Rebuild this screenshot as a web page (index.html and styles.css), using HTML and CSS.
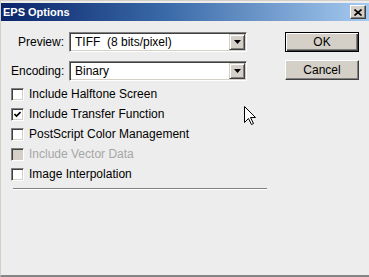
FILE: index.html
```html
<!DOCTYPE html>
<html lang="en">
<head>
    <meta charset="UTF-8">
    <meta name="viewport" content="width=device-width, initial-scale=1.0">
    <title>EPS Options</title>
    <link rel="stylesheet" href="styles.css">
</head>
<body>
    <div class="window">
        <!-- Title bar -->
        <div class="titlebar">
            <span class="title">EPS Options</span>
            <button class="close" aria-label="Close">
                <svg width="8" height="7" viewBox="0 0 8 7">
                    <path d="M0.5 0.5 L7.5 6.5 M7.5 0.5 L0.5 6.5" stroke="#000" stroke-width="1.6" fill="none"/>
                </svg>
            </button>
        </div>

        <div class="content">
            <div class="form">
                <div class="field">
                    <label class="field-label">Preview:</label>
                    <div class="combo">
                        <span class="combo-text">TIFF  (8 bits/pixel)</span>
                        <span class="combo-btn">
                            <svg width="7" height="4" viewBox="0 0 7 4"><polygon points="0,0 7,0 3.5,4" fill="#000"/></svg>
                        </span>
                    </div>
                </div>
                <div class="field">
                    <label class="field-label">Encoding:</label>
                    <div class="combo">
                        <span class="combo-text">Binary</span>
                        <span class="combo-btn">
                            <svg width="7" height="4" viewBox="0 0 7 4"><polygon points="0,0 7,0 3.5,4" fill="#000"/></svg>
                        </span>
                    </div>
                </div>

                <ul class="checks">
                    <li class="check"><span class="box"></span>Include Halftone Screen</li>
                    <li class="check"><span class="box checked">
                        <svg width="7" height="7" viewBox="0 0 7 7"><polyline points="0.5,3 2.5,5 6.5,1" stroke="#000" stroke-width="1.6" fill="none"/></svg>
                    </span>Include Transfer Function</li>
                    <li class="check"><span class="box"></span>PostScript Color Management</li>
                    <li class="check disabled"><span class="box"></span>Include Vector Data</li>
                    <li class="check"><span class="box"></span>Image Interpolation</li>
                </ul>

                <div class="separator"></div>
            </div>

            <div class="buttons">
                <button class="btn default">OK</button>
                <button class="btn">Cancel</button>
            </div>
        </div>

        <!-- mouse pointer -->
        <svg class="cursor" width="12" height="19" viewBox="0 0 12 19">
            <path d="M0.5 0.5 L0.5 16.5 L4.5 12.5 L7.5 18.5 L9.5 17.5 L6.5 11.5 L11.5 11.5 Z" fill="#fff" stroke="#000" stroke-width="1"/>
        </svg>
    </div>
</body>
</html>
```

FILE: styles.css
```css
body {
    margin: 0;
    padding: 0;
    background-color: #ededed;
    font-family: "Liberation Sans", Arial, sans-serif;
    font-size: 12px;
    color: #000;
}

.window {
    position: relative;
    width: 369px;
    height: 277px;
    box-sizing: border-box;
    padding-top: 2px;
    border-top: 1px solid #d4d0c8;
    border-left: 1px solid #d4d0c8;
    border-bottom: 2px solid #858585;
    overflow: hidden;
}

.titlebar {
    height: 18px;
    display: flex;
    align-items: center;
    justify-content: space-between;
    padding: 0 3px 0 2px;
    background: linear-gradient(to right, #0a246a, #3a6aa8 45%, #a6caf0);
}

.title {
    color: #fff;
    font-size: 11px;
    font-weight: bold;
}

.close {
    width: 16px;
    height: 14px;
    padding: 0;
    display: flex;
    align-items: center;
    justify-content: center;
    background-color: #d4d0c8;
    border: 1px solid;
    border-color: #fff #404040 #404040 #fff;
    box-shadow: inset -1px -1px #808080;
}

.content {
    display: flex;
    padding: 11px 10px 0 10px;
}

.form {
    width: 258px;
}

.field {
    display: flex;
    align-items: center;
    height: 20px;
    margin-bottom: 9px;
}

.field-label {
    width: 53px;
    margin-right: 5px;
    text-align: right;
}

.combo {
    width: 178px;
    height: 20px;
    box-sizing: border-box;
    display: flex;
    align-items: center;
    background-color: #fff;
    border: 1px solid;
    border-color: #808080 #fff #fff #808080;
    box-shadow: inset 1px 1px #404040, inset -1px -1px #d4d0c8;
    padding: 1px;
}

.combo-text {
    flex: 1;
    padding-left: 4px;
    white-space: pre;
}

.combo-btn {
    width: 16px;
    height: 16px;
    box-sizing: border-box;
    display: flex;
    align-items: center;
    justify-content: center;
    background-color: #d4d0c8;
    border: 1px solid;
    border-color: #d4d0c8 #404040 #404040 #d4d0c8;
    box-shadow: inset 1px 1px #fff, inset -1px -1px #808080;
}

.checks {
    list-style: none;
    margin: -6px 0 0 0;
    padding: 0;
}

.check {
    display: flex;
    align-items: center;
    height: 20px;
}

.box {
    width: 13px;
    height: 13px;
    box-sizing: border-box;
    margin-right: 5px;
    display: flex;
    align-items: center;
    justify-content: center;
    background-color: #fff;
    border: 1px solid;
    border-color: #808080 #fff #fff #808080;
    box-shadow: inset 1px 1px #404040, inset -1px -1px #d4d0c8;
}

.check.disabled {
    color: #a7a7a7;
}

.check.disabled .box {
    background-color: #d4d0c8;
}

.separator {
    width: 254px;
    margin: 4px 0 0 2px;
    border-top: 1px solid #808080;
    border-bottom: 1px solid #fff;
}

.buttons {
    margin-left: auto;
    display: flex;
    flex-direction: column;
    gap: 8px;
}

.btn {
    width: 74px;
    height: 20px;
    padding: 0;
    font-family: "Liberation Sans", Arial, sans-serif;
    font-size: 12px;
    color: #000;
    background-color: #d4d0c8;
    border: 1px solid;
    border-color: #fff #404040 #404040 #fff;
    box-shadow: inset -1px -1px #808080;
}

.btn.default {
    border-color: #000;
    box-shadow: inset 1px 1px #fff, inset -1px -1px #404040, inset -2px -2px #808080;
}

.cursor {
    position: absolute;
    left: 243px;
    top: 105px;
}
```
